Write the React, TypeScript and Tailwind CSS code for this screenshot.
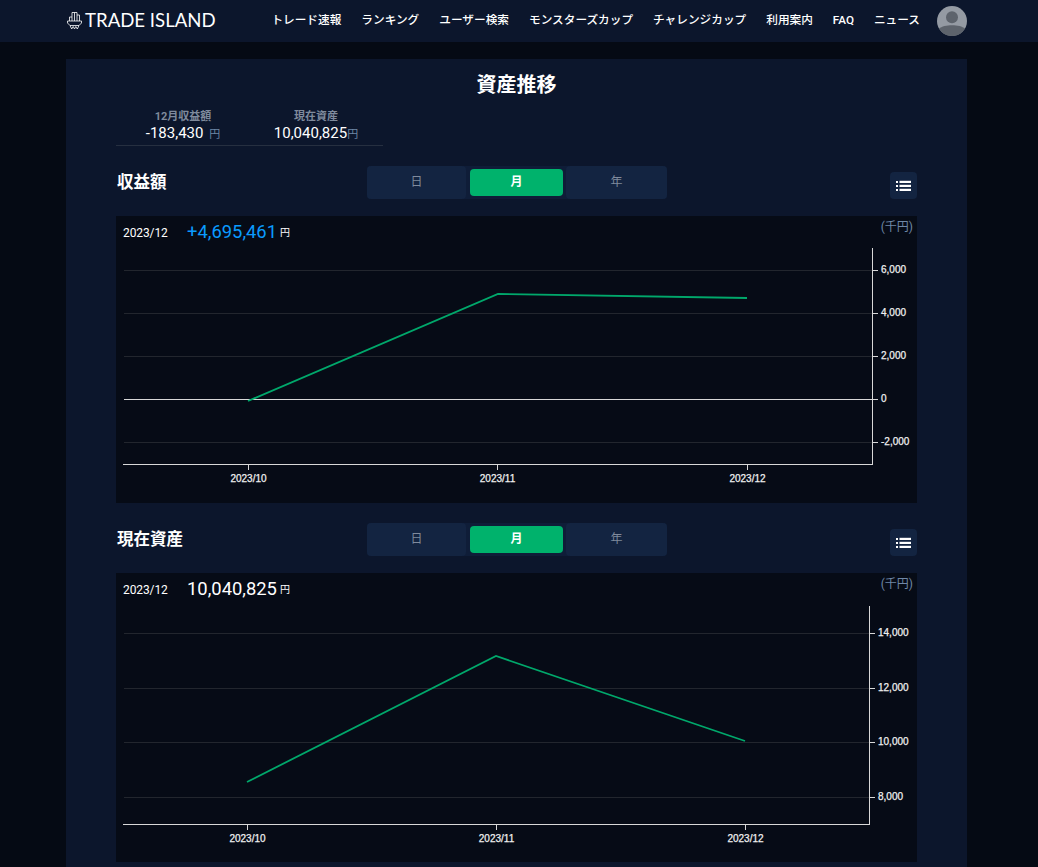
const navItems = [
  "トレード速報",
  "ランキング",
  "ユーザー検索",
  "モンスターズカップ",
  "チャレンジカップ",
  "利用案内",
  "FAQ",
  "ニュース",
];

type ChartProps = {
  axisX: number;
  axisBottom: number;
  axisTop: number;
  grid: { y: number; label: string; zero?: boolean }[];
  ticks: number[];
  line: string;
};

function ListIcon() {
  return (
    <svg width="15" height="12" viewBox="0 0 15 12" fill="#fff">
      <rect x="0" y="1" width="2" height="2" />
      <rect x="0" y="5" width="2" height="2" />
      <rect x="0" y="9" width="2" height="2" />
      <rect x="3.5" y="0.8" width="11.5" height="2.2" />
      <rect x="3.5" y="4.8" width="11.5" height="2.2" />
      <rect x="3.5" y="8.8" width="11.5" height="2.2" />
    </svg>
  );
}

function Chart({ axisX, axisBottom, axisTop, grid, ticks, line }: ChartProps) {
  const labels = ["2023/10", "2023/11", "2023/12"];
  return (
    <svg width="801" height="250" viewBox="0 0 801 250" className="block">
      {grid.map((g) => (
        <g key={g.label}>
          <line
            x1="8"
            x2={axisX}
            y1={g.y + 0.5}
            y2={g.y + 0.5}
            stroke={g.zero ? "#d8d8d8" : "#22262e"}
          />
          <line x1={axisX} x2={axisX + 6} y1={g.y + 0.5} y2={g.y + 0.5} stroke="#d8d8d8" />
          <text
            x={axisX + 9}
            y={g.y + 3}
            fill="#f0f0f0"
            stroke="#f0f0f0"
            strokeWidth="0.25"
            fontSize="10"
            fontFamily="'Liberation Sans', sans-serif"
          >
            {g.label}
          </text>
        </g>
      ))}
      <line x1={axisX + 0.5} x2={axisX + 0.5} y1={axisTop} y2={axisBottom + 1} stroke="#d8d8d8" />
      <line x1="7" x2={axisX + 1} y1={axisBottom + 0.5} y2={axisBottom + 0.5} stroke="#d8d8d8" />
      {ticks.map((x, i) => (
        <g key={x}>
          <line x1={x + 0.5} x2={x + 0.5} y1={axisBottom} y2={axisBottom + 6} stroke="#d8d8d8" />
          <text
            x={x + 0.5}
            y={axisBottom + 18}
            fill="#f0f0f0"
            stroke="#f0f0f0"
            strokeWidth="0.25"
            fontSize="10"
            textAnchor="middle"
            fontFamily="'Liberation Sans', sans-serif"
          >
            {labels[i]}
          </text>
        </g>
      ))}
      <polyline points={line} fill="none" stroke="#00a86b" strokeWidth="1.8" />
    </svg>
  );
}

function Section({
  title,
  value,
  valueClass,
  boxClass,
  chart,
}: {
  title: string;
  value: string;
  valueClass: string;
  boxClass: string;
  chart: ChartProps;
}) {
  return (
    <section>
      <div className="relative flex h-[33px] items-center justify-between">
        <h2 className="pl-px pt-[1px] text-[16.5px] font-bold text-white">{title}</h2>
        <div className="absolute left-[251px] top-0 flex h-[33px] w-[300px] rounded-sm bg-[#0f1d38] text-xs">
          <div className="flex w-[99px] items-center justify-center rounded-sm bg-[#132441] pb-[2px] text-[#7f8a9c]">
            日
          </div>
          <div className="flex w-[100px] items-center justify-center pl-[1px]">
            <div className="flex h-[27px] w-[93px] items-center justify-center rounded-sm bg-[#00b26c] pb-[2px] font-bold text-white">
              月
            </div>
          </div>
          <div className="flex w-[101px] items-center justify-center rounded-sm bg-[#132441] pb-[2px] text-[#7f8a9c]">
            年
          </div>
        </div>
        <button className="mt-[6px] flex h-[27px] w-[27px] items-center justify-center rounded-sm bg-[#132441] text-white">
          <ListIcon />
        </button>
      </div>
      <div className={`relative mt-[17px] bg-[#060b16] text-white ${boxClass}`}>
        <div className="flex h-[32px] items-center pl-[7px]">
          <span className="mt-[1px] w-[64px] text-xs tracking-[-0.1px]">2023/12</span>
          <span className={`text-[18.4px] ${valueClass}`}>{value}</span>
          <span className="ml-[3px] mt-[1px] text-[10px]">円</span>
        </div>
        <span className="absolute right-[4px] top-[3px] text-xs text-[#6f87a6]">(千円)</span>
        <Chart {...chart} />
      </div>
    </section>
  );
}

export default function App() {
  return (
    <div
      className="h-[867px] overflow-hidden bg-[#050a14] text-white"
      style={{ fontFamily: "Roboto, 'Noto Sans CJK JP', sans-serif" }}
    >
      <header className="flex h-[42px] items-center bg-[#0c162c] pl-[67px] pr-[71px]">
        <div className="flex items-center gap-[3px]">
          <svg width="15" height="19" viewBox="0 0 15 19" fill="none" stroke="#fff" strokeWidth="0.8">
            <path d="M2.5 10V6H5V1.5H10V4H12.5V10M5 6V10M7.5 1.5V10M10 4V10" />
            <path d="M0.5 10H14.5V12L12 14.5H3L0.5 12Z" />
            <path d="M3 14.5L4.7 18L6.2 15.5L7.5 18L8.8 15.5L10.3 18L12 14.5" />
          </svg>
          <span className="text-[18.6px] text-white" style={{ fontFamily: "Lato, sans-serif" }}>
            TRADE ISLAND
          </span>
        </div>
        <nav className="ml-auto flex items-center gap-[20px] text-[11.67px] font-medium">
          {navItems.map((item) => (
            <span key={item}>{item}</span>
          ))}
        </nav>
        <div className="ml-[17px] h-[30px] w-[30px]">
          <svg viewBox="0 0 30 30" width="30" height="30">
            <circle cx="15" cy="15" r="15" fill="#949aa3" />
            <circle cx="15" cy="11.3" r="6" fill="#5d636c" />
            <path d="M2 22.5C7 18 23 18 28 22.5A15 15 0 0 1 2 22.5Z" fill="#5d636c" />
          </svg>
        </div>
      </header>

      <main className="mx-[66px] mt-[17px] w-[901px] bg-[#0c162c] px-[50px]">
        <h1 className="pt-[12px] text-center text-xl font-bold leading-[28px]">資産推移</h1>
        <div className="mt-[11px] flex h-[36px] w-[267px] border-b border-[#262f40] text-center">
          <div className="w-[134px]">
            <div className="text-[11px] font-bold leading-[14px] text-[#7f8a9c]">12月収益額</div>
            <div className="text-[15px] leading-[19px]">
              -183,430 <span className="ml-[2px] text-[11px] text-[#6f87a6]">円</span>
            </div>
          </div>
          <div className="w-[133px] pr-[1px]">
            <div className="text-[11px] font-bold leading-[14px] text-[#7f8a9c]">現在資産</div>
            <div className="text-[15px] leading-[19px]">
              10,040,825<span className="text-[11px] text-[#6f87a6]">円</span>
            </div>
          </div>
        </div>
        <div className="mt-[20px] flex flex-col gap-[20px]">
          <Section
            title="収益額"
            value="+4,695,461"
            valueClass="text-[#0a9bff]"
            boxClass="h-[287px]"
            chart={{
              axisX: 756,
              axisTop: 0,
              axisBottom: 216,
              grid: [
                { y: 22, label: "6,000" },
                { y: 65, label: "4,000" },
                { y: 108, label: "2,000" },
                { y: 151, label: "0", zero: true },
                { y: 194, label: "-2,000" },
              ],
              ticks: [132, 381, 631],
              line: "132,153 382,46 631,50",
            }}
          />
          <Section
            title="現在資産"
            value="10,040,825"
            valueClass="text-white"
            boxClass="h-[289px]"
            chart={{
              axisX: 753,
              axisTop: 1,
              axisBottom: 219,
              grid: [
                { y: 28, label: "14,000" },
                { y: 83, label: "12,000" },
                { y: 137, label: "10,000" },
                { y: 192, label: "8,000" },
              ],
              ticks: [131, 380, 629],
              line: "131,177 380,51 629,136",
            }}
          />
        </div>
        <div className="h-[6px]" />
      </main>
    </div>
  );
}
